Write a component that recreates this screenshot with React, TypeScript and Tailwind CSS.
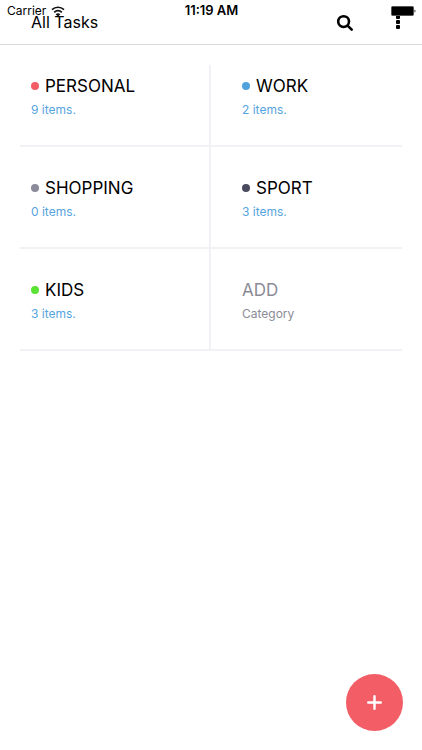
type Category = { name: string; count: number; dot: string };

const categories: Category[] = [
  { name: 'PERSONAL', count: 9, dot: 'bg-[#f25d66]' },
  { name: 'WORK', count: 2, dot: 'bg-[#50a1de]' },
  { name: 'SHOPPING', count: 0, dot: 'bg-[#8b8b9b]' },
  { name: 'SPORT', count: 3, dot: 'bg-[#4a4a5e]' },
  { name: 'KIDS', count: 3, dot: 'bg-[#5ce233]' },
];

function StatusBar() {
  return (
    <div className="pointer-events-none absolute inset-x-0 top-0 grid h-[22px] grid-cols-3 items-center pl-[7px] pr-[6px] text-[12px] text-black">
      <div className="flex items-center gap-[5px]">
        <span>Carrier</span>
        <svg width="14" height="11" viewBox="0 0 14 11" fill="none" stroke="#111" strokeWidth="1.7" aria-hidden="true">
          <path d="M1 3.7C4.4 .4 9.6 .4 13 3.7" />
          <path d="M3.2 6.3C5.5 4 8.5 4 10.8 6.3" />
          <path d="M4.7 8.2C6.1 7 7.9 7 9.3 8.2L7 10.8Z" fill="#111" stroke="none" />
        </svg>
      </div>
      <span className="text-center text-[13px] font-semibold">11:19 AM</span>
      <svg className="justify-self-end" width="25" height="10" viewBox="0 0 25 10" aria-hidden="true">
        <rect x=".5" y=".5" width="22" height="9" rx="1" fill="#000" stroke="#555" strokeWidth="1" />
        <path d="M23.5 3.5C24.8 4 24.8 6 23.5 6.5Z" fill="#222" />
      </svg>
    </div>
  );
}

function Header() {
  return (
    <header className="flex h-[45px] items-center justify-between border-b border-[#d9d9d9] pl-[31px] pr-[18px]">
      <h1 className="text-[16px] leading-[20px]">All Tasks</h1>
      <div className="flex items-center gap-[38px]">
        <button type="button" aria-label="Search" className="block pt-[2px]">
          <svg width="18" height="18" viewBox="0 0 18 18" fill="none" stroke="#000" strokeWidth="2.6" strokeLinecap="round">
            <circle cx="7.6" cy="7.6" r="5.4" />
            <path d="M11.6 11.6L15.7 15.7" />
          </svg>
        </button>
        <button type="button" aria-label="More" className="block">
          <svg width="12" height="16" viewBox="0 0 12 16">
            <rect x="4" y="1" width="4" height="4" rx="1" />
            <rect x="4" y="6" width="4" height="4" rx="1" />
            <rect x="4" y="11" width="4" height="4" rx="1" />
          </svg>
        </button>
      </div>
    </header>
  );
}

const cell =
  'flex h-[102px] flex-col justify-start border-b-2 border-[#f2f2f6] pt-[30px] text-left odd:border-r-2 odd:pl-[11px] even:pl-[31px] nth-[-n+2]:h-[82px] nth-[-n+2]:pt-[10px]';

export default function App() {
  return (
    <div className="relative min-h-screen bg-white font-['Inter',sans-serif] text-black">
      <Header />
      <StatusBar />
      <main className="mx-[20px] mt-[20px] grid grid-cols-2">
        {categories.map((c) => (
          <button key={c.name} type="button" className={cell}>
            <span className="flex items-center gap-[6px] text-[17px] leading-[22px]">
              <span className={`size-[8px] rounded-full ${c.dot}`} />
              {c.name}
            </span>
            <span className="mt-[5px] block text-[12px] leading-[16px] text-[#56a4de]">{c.count} items.</span>
          </button>
        ))}
        <button type="button" className={`${cell} text-[#8b8b97]`}>
          <span className="block text-[17px] leading-[22px]">ADD</span>
          <span className="mt-[5px] block text-[12px] leading-[16px]">Category</span>
        </button>
      </main>
      <button
        type="button"
        aria-label="Add task"
        className="fixed bottom-[19px] right-[19px] flex size-[57px] items-center justify-center rounded-full bg-[#f25d66]"
      >
        <svg width="15" height="15" viewBox="0 0 15 15" stroke="#fff" strokeWidth="2.4" strokeLinecap="round">
          <path d="M7.5 1.2V13.8M1.2 7.5H13.8" />
        </svg>
      </button>
    </div>
  );
}
